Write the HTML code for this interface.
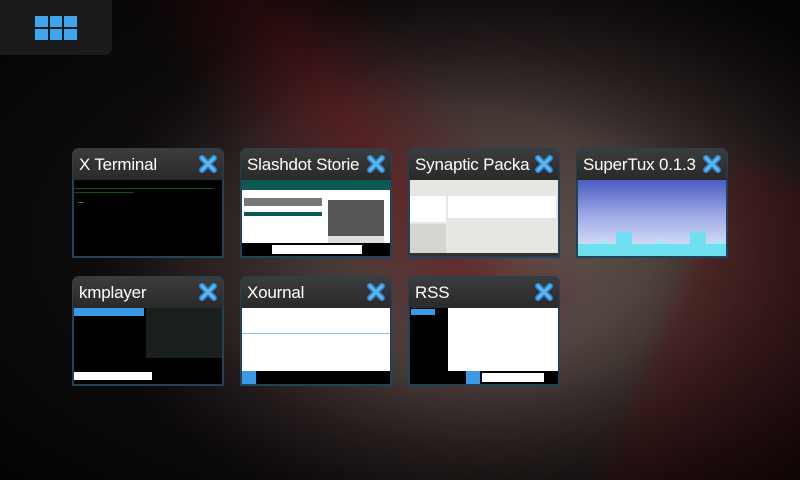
<!DOCTYPE html><html style="overflow:hidden"><head><style>
html,body{margin:0;width:800px;height:480px;overflow:hidden}
body{position:relative;font-family:"Liberation Sans","DejaVu Sans",sans-serif;background:#100c0c;}
.bg{position:absolute;left:0;top:0;width:800px;height:480px;overflow:hidden}
.bg div{position:absolute}
.card{position:absolute;width:152px;height:110px;border-radius:7px 7px 0 0;background:#24415a;}
.hd{position:absolute;left:1px;top:1px;right:1px;height:31px;border-radius:6px 6px 0 0;background:linear-gradient(#3c3c3c,#2a2a2a);color:#fff;font-size:17px;line-height:31px;padding-left:6px;white-space:nowrap;overflow:hidden;letter-spacing:-0.2px}
.x{position:absolute;right:6px;top:6px;width:20px;height:20px}
.ct{position:absolute;left:2px;top:32px;right:2px;bottom:2px;background:#000;overflow:hidden}
.tb{position:absolute;left:0;right:0;bottom:0;height:14px;background:#000}
</style></head><body>
<div class="bg">
<div style="left:0;top:0;width:800px;height:480px;background:radial-gradient(ellipse 420px 300px at 520px 260px,#5e534d 0%,#4a3e3a 40%,#2a2020 75%,#120e0e 100%)"></div>
<div style="left:260px;top:-120px;width:200px;height:520px;transform:rotate(-38deg);background:linear-gradient(90deg,rgba(110,20,25,0),rgba(105,20,26,.55),rgba(110,20,25,0));filter:blur(8px)"></div>
<div style="left:660px;top:180px;width:200px;height:360px;transform:rotate(22deg);background:rgba(100,22,26,.45);filter:blur(12px)"></div>
<div style="left:0;top:0;width:800px;height:480px;background:radial-gradient(ellipse at 52% 50%,rgba(0,0,0,0) 40%,rgba(0,0,0,.8) 100%)"></div>
</div>
<div style="position:absolute;left:0;top:0;width:112px;height:55px;background:#1b1b1b;border-radius:0 0 6px 0"></div>
<svg style="position:absolute;left:35px;top:16px" width="42" height="25"><g fill="#3ea6ec"><rect x="0" y="0" width="13" height="11"/><rect x="15" y="0" width="12" height="11"/><rect x="29" y="0" width="13" height="11"/><rect x="0" y="13" width="13" height="11"/><rect x="15" y="13" width="12" height="11"/><rect x="29" y="13" width="13" height="11"/></g></svg>

<svg width="0" height="0" style="position:absolute"><defs><symbol id="X" viewBox="0 0 20 20"><path d="M4 4L16 16M16 4L4 16" stroke="#2a86d0" stroke-width="6" stroke-linecap="round"/><path d="M4 4L16 16M16 4L4 16" stroke="#5fb6f2" stroke-width="3" stroke-linecap="round"/></symbol></defs></svg>

<div class="card" style="left:72px;top:148px"><div class="hd">X Terminal</div><svg class="x"><use href="#X"/></svg>
<div class="ct"><div style="position:absolute;left:0;top:8px;width:140px;height:1px;background:#1c8a1c;opacity:.6"></div><div style="position:absolute;left:0;top:12px;width:60px;height:1px;background:#1c8a1c;opacity:.6"></div><div style="position:absolute;left:4px;top:22px;width:6px;height:1px;background:#1c8a1c"></div></div></div>

<div class="card" style="left:240px;top:148px"><div class="hd">Slashdot Storie</div><svg class="x"><use href="#X"/></svg>
<div class="ct" style="background:#fff"><div style="height:10px;background:#0d5a55"></div><div style="position:absolute;left:2px;top:18px;width:78px;height:8px;background:#777"></div><div style="position:absolute;left:2px;top:32px;width:78px;height:4px;background:#0d5a55"></div><div style="position:absolute;left:86px;top:20px;width:56px;height:36px;background:#555"></div><div style="position:absolute;left:86px;top:56px;width:56px;height:10px;background:#ddd"></div><div class="tb" style="height:13px"><div style="position:absolute;left:30px;top:2px;width:90px;height:9px;background:#fff"></div></div></div></div>

<div class="card" style="left:408px;top:148px"><div class="hd">Synaptic Packa</div><svg class="x"><use href="#X"/></svg>
<div class="ct" style="background:#e8e6e2"><div style="position:absolute;left:0;top:16px;width:36px;height:26px;background:#fff"></div><div style="position:absolute;left:38px;top:16px;width:108px;height:22px;background:#fff"></div><div style="position:absolute;left:0;top:44px;width:36px;height:32px;background:#d6d4d0"></div><div style="position:absolute;left:0;bottom:0;width:148px;height:3px;background:#333"></div></div></div>

<div class="card" style="left:576px;top:148px"><div class="hd">SuperTux 0.1.3</div><svg class="x"><use href="#X"/></svg>
<div class="ct" style="background:linear-gradient(#4a5cc0,#9aa8e6 45%,#e8ecfa)"><div style="position:absolute;left:0;bottom:0;width:148px;height:12px;background:#6ee0f0"></div><div style="position:absolute;left:38px;bottom:10px;width:16px;height:14px;background:#6ee0f0"></div><div style="position:absolute;left:112px;bottom:10px;width:16px;height:14px;background:#6ee0f0"></div><div style="position:absolute;left:20px;bottom:12px;width:10px;height:5px;background:#a8e8f4"></div><div style="position:absolute;left:78px;bottom:12px;width:10px;height:5px;background:#a8e8f4"></div><div style="position:absolute;left:136px;bottom:12px;width:10px;height:5px;background:#a8e8f4"></div></div></div>

<div class="card" style="left:72px;top:276px"><div class="hd">kmplayer</div><svg class="x"><use href="#X"/></svg>
<div class="ct"><div style="position:absolute;left:0;top:0;width:70px;height:8px;background:#3a9ae8"></div><div style="position:absolute;left:72px;top:0;width:76px;height:50px;background:#1a1f1f"></div><div style="position:absolute;left:0;top:64px;width:78px;height:8px;background:#fff"></div></div></div>

<div class="card" style="left:240px;top:276px"><div class="hd">Xournal</div><svg class="x"><use href="#X"/></svg>
<div class="ct" style="background:#fff"><div style="position:absolute;left:0;top:25px;width:148px;height:1px;background:#8ab8e8"></div><div class="tb" style="height:13px"><div style="width:14px;height:13px;background:#3a9ae8"></div></div></div></div>

<div class="card" style="left:408px;top:276px"><div class="hd">RSS</div><svg class="x"><use href="#X"/></svg>
<div class="ct" style="background:#fff"><div style="position:absolute;left:0;top:0;width:38px;height:80px;background:#000"></div><div style="position:absolute;left:1px;top:1px;width:24px;height:6px;background:#3a9ae8"></div><div class="tb" style="height:13px"><div style="position:absolute;left:56px;top:0;width:14px;height:13px;background:#3a9ae8"></div><div style="position:absolute;left:72px;top:2px;width:62px;height:9px;background:#fff"></div></div></div></div>
</body></html>
